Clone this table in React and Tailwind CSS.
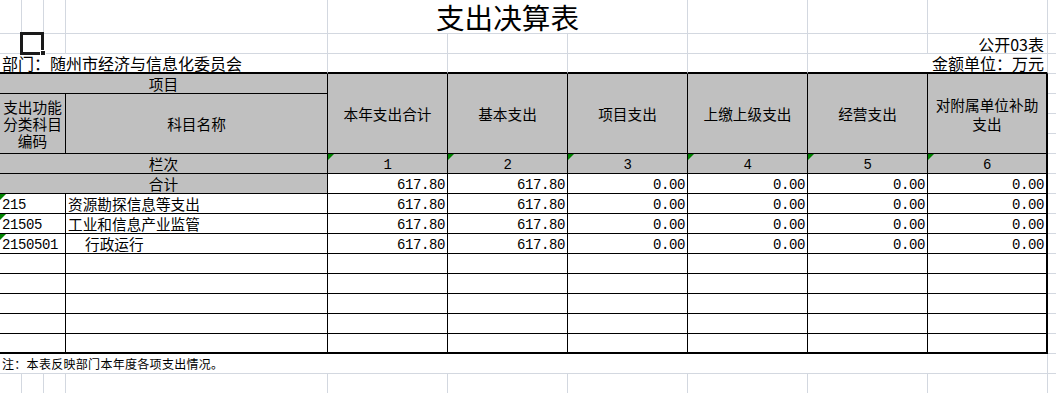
import React from 'react';

// gridline / table border presets
const G = 'border-r border-b border-[#d3d8e0]';
const T = 'border-r border-b border-black';
const GRAY = 'bg-[#c0c0c0]';
const CJK = "font-['Noto_Sans_CJK_SC',sans-serif] text-[14.67px] leading-[17px] text-black";
const NUM = "font-['Liberation_Mono',monospace] text-[14px] leading-[16px] tracking-[-0.4px] text-black";
const BIG = "font-['Noto_Sans_CJK_SC',sans-serif] text-[16px] leading-[16px] text-black";

const heads = ['本年支出合计', '基本支出', '项目支出', '上缴上级支出', '经营支出', '对附属单位补助支出'];
const total = ['617.80', '617.80', '0.00', '0.00', '0.00', '0.00'];
const rows = [
  { code: '215', name: '资源勘探信息等支出', vals: total },
  { code: '21505', name: '工业和信息产业监管', vals: total },
  { code: '2150501', name: '行政运行', indent: true, vals: total },
];

function Cell({ className = '', children }) {
  return <div className={`relative flex min-w-0 items-center ${className}`}>{children}</div>;
}

function Flag() {
  return (
    <span className="absolute left-0 top-0 h-0 w-0 border-t-[6px] border-r-[6px] border-t-[#008000] border-r-transparent" />
  );
}

export default function App() {
  return (
    <div className="relative h-[393px] w-[1056px] overflow-hidden bg-white">
      <div className="grid grid-cols-[22px_22px_22px_262px_repeat(6,120px)_8px] grid-rows-[34px_repeat(18,20px)]">
        {/* row 1: title */}
        <Cell className={G} />
        <Cell className={G} />
        <Cell className={G} />
        <Cell className={G} />
        <Cell className={`${G} col-span-3 justify-center`}>
          <span className="font-['Noto_Sans_CJK_SC',sans-serif] text-[28.6px] leading-[29px] text-black">支出决算表</span>
        </Cell>
        <Cell className={G} />
        <Cell className={G} />
        <Cell className={G} />
        <Cell className="border-b border-[#d3d8e0]" />

        {/* row 2 */}
        {Array.from({ length: 9 }).map((_, i) => (
          <Cell key={i} className={G} />
        ))}
        <Cell className={`${G} justify-end pr-[3px]`}>
          <span className={BIG}>公开03表</span>
        </Cell>
        <Cell className="border-b border-[#d3d8e0]" />

        {/* row 3 */}
        <Cell className="col-span-4 items-end border-r border-r-[#d3d8e0] border-b-2 border-b-black pl-[2px]">
          <span className={`${BIG} pb-[1px]`}>部门：随州市经济与信息化委员会</span>
        </Cell>
        <Cell className="border-r border-r-[#d3d8e0] border-b-2 border-b-black" />
        <Cell className="border-r border-r-[#d3d8e0] border-b-2 border-b-black" />
        <Cell className="border-r border-r-[#d3d8e0] border-b-2 border-b-black" />
        <Cell className="border-r border-r-[#d3d8e0] border-b-2 border-b-black" />
        <Cell className="col-span-2 items-end justify-end border-r border-r-[#d3d8e0] border-b-2 border-b-black pr-[3px]">
          <span className={`${BIG} pb-[1px]`}>金额单位：万元</span>
        </Cell>
        <Cell className="border-b border-[#d3d8e0]" />

        {/* row 4: table header */}
        <Cell className={`${T} ${GRAY} col-span-4 justify-center`}>
          <span className={CJK}>项目</span>
        </Cell>
        {heads.map((h, i) => (
          <Cell
            key={h}
            className={`${GRAY} row-span-4 justify-center px-[5px] text-center border-b border-black ${i === 5 ? 'border-r-2' : 'border-r'}`}
          >
            <span className={`${CJK} leading-[19px]`}>{h}</span>
          </Cell>
        ))}
        <Cell className="border-b border-[#d3d8e0]" />

        <Cell className={`${T} ${GRAY} col-span-3 row-span-3 justify-center text-center`}>
          <span className={`${CJK} leading-[17.5px]`}>支出功能分类科目编码</span>
        </Cell>
        <Cell className={`${T} ${GRAY} row-span-3 justify-center`}>
          <span className={CJK}>科目名称</span>
        </Cell>
        <Cell className="border-b border-[#d3d8e0]" />
        <Cell className="border-b border-[#d3d8e0]" />
        <Cell className="border-b border-[#d3d8e0]" />

        {/* 栏次 */}
        <Cell className={`${T} ${GRAY} col-span-4 justify-center`}>
          <span className={CJK}>栏次</span>
        </Cell>
        {heads.map((h, i) => (
          <Cell key={h} className={`${GRAY} justify-center border-b border-black ${i === 5 ? 'border-r-2' : 'border-r'}`}>
            <Flag />
            <span className={`${NUM} pt-[2px]`}>{i + 1}</span>
          </Cell>
        ))}
        <Cell className="border-b border-[#d3d8e0]" />

        {/* 合计 */}
        <Cell className={`${T} ${GRAY} col-span-4 justify-center`}>
          <span className={CJK}>合计</span>
        </Cell>
        {total.map((v, i) => (
          <Cell key={i} className={`justify-end pr-[2px] border-b border-black ${i === 5 ? 'border-r-2' : 'border-r'}`}>
            <span className={`${NUM} pt-[2px]`}>{v}</span>
          </Cell>
        ))}
        <Cell className="border-b border-[#d3d8e0]" />

        {/* data rows */}
        {rows.map((r) => (
          <React.Fragment key={r.code}>
            <Cell className={`${T} col-span-3 pl-[2px]`}>
              <Flag />
              <span className={`${NUM} pt-[2px]`}>{r.code}</span>
            </Cell>
            <Cell className={`${T} ${r.indent ? 'pl-[19px]' : 'pl-[2px]'}`}>
              <span className={CJK}>{r.name}</span>
            </Cell>
            {r.vals.map((v, i) => (
              <Cell key={i} className={`justify-end pr-[2px] border-b border-black ${i === 5 ? 'border-r-2' : 'border-r'}`}>
                <span className={`${NUM} pt-[2px]`}>{v}</span>
              </Cell>
            ))}
            <Cell className="border-b border-[#d3d8e0]" />
          </React.Fragment>
        ))}

        {/* empty rows */}
        {[0, 1, 2, 3, 4].map((k) => {
          const b = k === 4 ? 'border-b-2' : 'border-b';
          return (
            <React.Fragment key={k}>
              <Cell className={`border-r border-black ${b} col-span-3`} />
              <Cell className={`border-r border-black ${b}`} />
              {[0, 1, 2, 3, 4, 5].map((i) => (
                <Cell key={i} className={`border-black ${b} ${i === 5 ? 'border-r-2' : 'border-r'}`} />
              ))}
              <Cell className="border-b border-[#d3d8e0]" />
            </React.Fragment>
          );
        })}

        {/* note */}
        <Cell className={`${G} col-span-10 pl-[2px]`}>
          <span className="font-['Noto_Sans_CJK_SC',sans-serif] text-[12px] tracking-[0.3px] leading-[16px] text-black">
            注：本表反映部门本年度各项支出情况。
          </span>
        </Cell>
        <Cell className="border-b border-[#d3d8e0]" />

        {/* last visible row */}
        {Array.from({ length: 10 }).map((_, i) => (
          <Cell key={i} className={G} />
        ))}
        <Cell className="border-b border-[#d3d8e0]" />
      </div>

      {/* active cell selection */}
      <div className="absolute left-[20px] top-[32px] h-[23px] w-[24px] border-[3px] border-[#1a1a1a]" />
      <div className="absolute left-[40px] top-[50px] h-[6px] w-[6px] border border-white bg-[#1a1a1a]" />
    </div>
  );
}
